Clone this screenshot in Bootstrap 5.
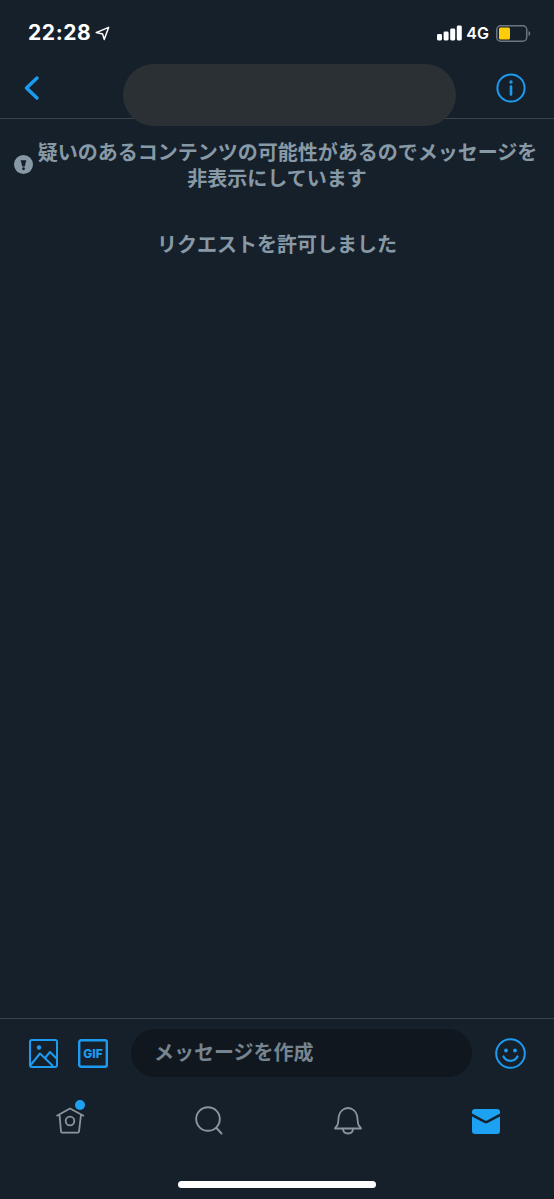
<!DOCTYPE html>
<html lang="ja">

<head>
    <meta charset="UTF-8">
    <meta name="viewport" content="width=device-width, initial-scale=1.0">
    <title>メッセージ</title>
    <link href="https://cdn.jsdelivr.net/npm/bootstrap@5.3.2/dist/css/bootstrap.min.css" rel="stylesheet">
    <script src="https://cdn.jsdelivr.net/npm/bootstrap@5.3.2/dist/js/bootstrap.bundle.min.js"></script>
    <style>
        body {
            background: #16202b;
            font-family: "Liberation Sans", "Noto Sans CJK JP", sans-serif;
            overflow: hidden;
        }

        .screen {
            height: 1199px;
            position: relative;
        }

        /* barra de estado */
        .status-row {
            height: 64px;
            padding: 21px 23px 0 28px;
            color: #fff;
        }

        .clock {
            font-family: Inter, "Liberation Sans", sans-serif;
            font-size: 21px;
            font-weight: 700;
            line-height: 24px;
            letter-spacing: .6px;
        }

        .net-label {
            font-family: Inter, "Liberation Sans", sans-serif;
            font-size: 16px;
            font-weight: 600;
            line-height: 24px;
        }

        .batt-icon {
            margin-left: 6px;
        }

        .top-nav {
            height: 55px;
            padding: 0 28px 6px 22px;
            border-bottom: 1px solid #38444d;
        }

        /* tapa el nombre de la conversacion */
        .name-cover {
            position: absolute;
            left: 123px;
            top: 64px;
            width: 333px;
            height: 62px;
            border-radius: 31px;
            background: #2b3035;
        }

        .notice-list {
            flex: 1 1 auto;
            color: #8899a6;
            font-size: 20px;
            font-weight: 700;
            line-height: 26px;
            padding: 21px 14px 0;
        }

        /* el icono baja por debajo de la primera linea sin agrandarla */
        .warn-icon {
            margin-left: -3px;
            margin-right: 5px;
            margin-bottom: -20px;
        }

        .granted-line {
            margin-top: 40px;
        }

        .composer {
            height: 70px;
            border-top: 1px solid #38444d;
            padding: 10px 0 0 29px;
        }

        .composer-row {
            height: 48px;
        }

        .gif-icon {
            margin-left: 20px;
        }

        .msg-field {
            width: 341px;
            height: 48px;
            margin-left: 23px;
            margin-right: 23px;
            padding-left: 23px;
            border-radius: 24px;
            background: #10171e;
            color: #76848f;
            font-size: 20px;
            font-weight: 700;
        }

        .tab-row {
            height: 111px;
            padding: 11px 54px 0 55px;
        }

        .home-bar {
            position: absolute;
            left: 178px;
            top: 1181px;
            width: 198px;
            height: 7px;
            border-radius: 4px;
            background: #fff;
        }
    </style>
</head>

<body>
    <div class="screen d-flex flex-column">
        <!-- Barra de estado -->
        <div class="status-row d-flex justify-content-between align-items-start">
            <div class="d-flex align-items-center gap-1">
                <span class="clock">22:28</span>
                <svg width="15" height="15" viewBox="0 0 15 15" fill="none" stroke="#fff" stroke-width="1.5" stroke-linejoin="round">
                    <path d="M1.2 6.6 13.6 1.4 9.2 13.4 7.6 7.9Z" />
                </svg>
            </div>
            <div class="d-flex align-items-center">
                <svg width="25" height="17" viewBox="0 0 25 17" fill="#fff">
                    <rect x="0" y="9" width="5" height="6.500" rx="1.400" />
                    <rect x="6.600" y="6.500" width="5" height="9" rx="1.400" />
                    <rect x="13.200" y="3.500" width="5" height="12" rx="1.400" />
                    <rect x="19.800" y="0.500" width="5" height="15" rx="1.400" />
                </svg>
                <span class="net-label ms-1">4G</span>
                <svg class="batt-icon" width="36" height="17" viewBox="0 0 36 17">
                    <rect x="1.750" y=".75" width="30" height="15.500" rx="4" fill="none" stroke="#6b7680" stroke-width="1.500" />
                    <rect x="4" y="2.500" width="11" height="12" rx="1.500" fill="#ffcc0a" />
                    <path d="M33.500 6v5c1.200-.5 1.800-1.400 1.800-2.500S34.700 6.500 33.500 6Z" fill="#6b7680" />
                </svg>
            </div>
        </div>

        <!-- Cabecera -->
        <div class="top-nav d-flex justify-content-between align-items-center">
            <svg width="20" height="26" viewBox="0 0 20 26" fill="none" stroke="#1d9bf0" stroke-width="3.400" stroke-linecap="round" stroke-linejoin="round">
                <path d="M15 3 4.500 13 15 23" />
            </svg>
            <svg width="30" height="30" viewBox="0 0 30 30" fill="none" stroke="#1d9bf0" stroke-width="2">
                <circle cx="15" cy="15" r="13.600" />
                <path d="M15 13.500v8" stroke-width="2.600" stroke-linecap="round" />
                <circle cx="15" cy="9" r="1.700" fill="#1d9bf0" stroke="none" />
            </svg>
        </div>
        <div class="name-cover"></div>

        <!-- Avisos -->
        <div class="notice-list text-center">
            <div>
                <svg class="warn-icon" width="19" height="19" viewBox="0 0 20 20">
                    <circle cx="10" cy="10" r="10" fill="#8899a6" />
                    <path d="M7 5.500h6l-1.700 6.500H8.700Z" fill="#16202b" />
                    <circle cx="10" cy="14.500" r="1.500" fill="#16202b" />
                </svg>疑いのあるコンテンツの可能性があるのでメッセージを非表示にしています
            </div>
            <div class="granted-line">リクエストを許可しました</div>
        </div>

        <!-- Caja de mensaje -->
        <div class="composer">
            <div class="composer-row d-flex align-items-center">
                <svg class="flex-shrink-0" width="29" height="29" viewBox="0 0 29 29" fill="none" stroke="#1d9bf0" stroke-width="2" stroke-linejoin="round">
                    <rect x="1" y="1" width="27" height="27" rx="2" />
                    <circle cx="10" cy="8.500" r="2.200" fill="#1d9bf0" stroke="none" />
                    <path d="M1.700 26 11 14.500 24 27M16 19l5-6 6.500 6.500" />
                </svg>
                <svg class="gif-icon flex-shrink-0" width="30" height="29" viewBox="0 0 30 29">
                    <rect x="1.200" y="1.200" width="27.600" height="26.600" rx="2" fill="none" stroke="#1d9bf0" stroke-width="2.400" />
                    <text x="15" y="19" text-anchor="middle" fill="#1d9bf0" font-family="Inter" font-size="12" font-weight="800">GIF</text>
                </svg>
                <div class="msg-field d-flex align-items-center flex-shrink-0">メッセージを作成</div>
                <svg class="flex-shrink-0" width="31" height="31" viewBox="0 0 31 31" fill="none" stroke="#1d9bf0" stroke-width="2">
                    <circle cx="15.500" cy="15.500" r="14.300" />
                    <circle cx="11" cy="12.500" r="1.900" fill="#1d9bf0" stroke="none" />
                    <circle cx="20" cy="12.500" r="1.900" fill="#1d9bf0" stroke="none" />
                    <path d="M8.500 18.500c1.500 3 4 4.300 7 4.300s5.500-1.300 7-4.300" stroke-width="2.200" stroke-linecap="round" />
                </svg>
            </div>
        </div>

        <!-- Pestanas -->
        <div class="tab-row d-flex justify-content-between align-items-start">
            <svg width="30" height="38" viewBox="0 0 30 38" fill="none" stroke="#8b959e" stroke-width="1.800" stroke-linejoin="round">
                <path d="M1.500 17 15 9.500 29 17M4.500 15.500 6 32.500q.1 1.200 1.300 1.200h15.400q1.200 0 1.300-1.200l2-17" />
                <circle cx="15" cy="22" r="4.300" />
                <circle cx="25" cy="6" r="5" fill="#1da1f2" stroke="none" />
            </svg>
            <svg width="28" height="38" viewBox="0 0 28 38" fill="none" stroke="#8b959e" stroke-width="1.900" stroke-linecap="round">
                <circle cx="13" cy="20" r="11.800" />
                <path d="M21.500 29 26.500 34.500" />
            </svg>
            <svg width="28" height="38" viewBox="0 0 28 38" fill="none" stroke="#8b959e" stroke-width="1.800" stroke-linejoin="round">
                <path d="M1 29.500c0-1 1.700-1.800 2.500-3.500 1.200-3 .6-6 1.500-9.500 1-3.700 4.200-7.500 9-7.500s8 3.800 9 7.500c.9 3.500.3 6.500 1.500 9.500.8 1.700 2.500 2.500 2.500 3.500Z" />
                <path d="M9 29.500c0 3.500 2 5 5 5s5-1.500 5-5" />
            </svg>
            <svg width="28" height="38" viewBox="0 0 28 38">
                <path d="M0 13q0-3 3-3h22q3 0 3 3v1.500L15 21.500q-1 .5-2 0L0 14.500Z" fill="#1da1f2" />
                <path d="M0 17.500 12.500 24q1.500.7 3 0L28 17.500V32q0 3-3 3H3q-3 0-3-3Z" fill="#1da1f2" />
            </svg>
        </div>
        <div class="home-bar"></div>
    </div>
</body>

</html>
